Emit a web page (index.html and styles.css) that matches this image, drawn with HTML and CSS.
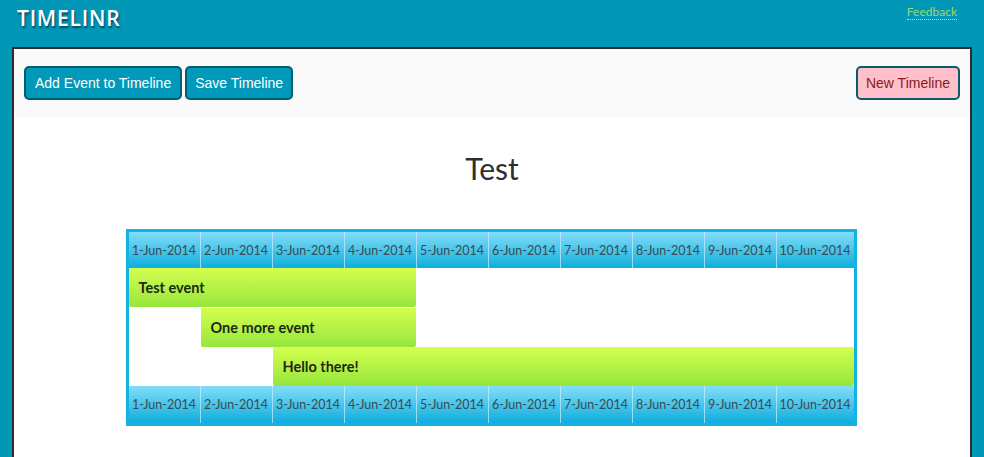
FILE: index.html
```html
<!DOCTYPE html>
<html>
<head>
<meta charset="utf-8">
<title>Timelinr</title>
<link rel="stylesheet" href="styles.css">
</head>
<body>
<header class="topbar">
  <div class="brand">TIMELINR</div>
  <a class="feedback" href="#">Feedback</a>
</header>
<main class="panel">
  <div class="toolbar">
    <div class="toolbar-left">
      <button class="btn">Add Event to Timeline</button>
      <button class="btn btn-save">Save Timeline</button>
    </div>
    <button class="btn btn-new">New Timeline</button>
  </div>
  <h1 class="title">Test</h1>
  <div class="timeline">
    <div class="dates">
      <div class="date">1-Jun-2014</div><div class="date">2-Jun-2014</div><div class="date">3-Jun-2014</div><div class="date">4-Jun-2014</div><div class="date">5-Jun-2014</div><div class="date">6-Jun-2014</div><div class="date">7-Jun-2014</div><div class="date">8-Jun-2014</div><div class="date">9-Jun-2014</div><div class="date">10-Jun-2014</div>
    </div>
    <div class="events">
      <div class="row"><div class="event span-1-5">Test event</div></div>
      <div class="row"><div class="event span-2-5">One more event</div></div>
      <div class="row"><div class="event span-3-11">Hello there!</div></div>
    </div>
    <div class="dates dates-bottom">
      <div class="date">1-Jun-2014</div><div class="date">2-Jun-2014</div><div class="date">3-Jun-2014</div><div class="date">4-Jun-2014</div><div class="date">5-Jun-2014</div><div class="date">6-Jun-2014</div><div class="date">7-Jun-2014</div><div class="date">8-Jun-2014</div><div class="date">9-Jun-2014</div><div class="date">10-Jun-2014</div>
    </div>
  </div>
</main>
</body>
</html>
```
FILE: styles.css
```css
html, body {
  margin: 0;
  padding: 0;
}
body {
  background: #0198b8;
  font-family: "Open Sans", "Noto Sans", sans-serif;
  overflow: hidden;
}
.topbar {
  height: 47px;
  display: flex;
  justify-content: space-between;
  align-items: flex-start;
  padding: 0 27px 0 17px;
  box-sizing: border-box;
}
.brand {
  margin-top: 5px;
  font-family: "Open Sans", sans-serif;
  font-weight: 600;
  font-size: 21px;
  letter-spacing: 0.8px;
  color: #ffffff;
  text-shadow: 1px 2px 2px rgba(0, 40, 60, 0.7);
  line-height: 26px;
}
.feedback {
  margin-top: 4px;
  font-family: "Lato", sans-serif;
  font-size: 12px;
  line-height: 15px;
  color: #9ed86a;
  text-decoration: none;
  border-bottom: 1px dotted #e8e82a;
}
.panel {
  margin: 0 12px;
  border: 2px solid #2c2c2c;
  background: #ffffff;
  height: 420px;
}
.toolbar {
  background: #fafafa;
  height: 68px;
  padding: 17px 10px 0 10px;
  box-sizing: border-box;
  display: flex;
  justify-content: space-between;
  align-items: flex-start;
}
.toolbar-left {
  display: flex;
  gap: 3px;
}
.btn {
  height: 34px;
  padding: 0 9px;
  border: 2px solid #035e6f;
  border-radius: 5px;
  background: #0199b9;
  color: #ffffff;
  font-family: "Liberation Sans", Arial, sans-serif;
  font-size: 14px;
}
.btn-save {
  padding: 0 8px;
}
.btn-new {
  background: #ffc0cb;
  color: #8a1a1a;
  border-color: #0a5a6a;
  padding: 0 8px;
}
.title {
  margin: 33px 0 0 0;
  text-align: center;
  font-family: "Lato", sans-serif;
  font-weight: 400;
  font-size: 30px;
  line-height: 37px;
  color: #2e2e2e;
}
.timeline {
  width: 725px;
  margin: 42px auto 0 auto;
  border: 3px solid #13b2e2;
  background: #ffffff;
  transform: translateX(-1px);
}
.dates {
  display: grid;
  grid-template-columns: 71px repeat(8, 72px) 1fr;
  height: 36px;
  background: linear-gradient(#83ddf8, #0eaedd);
}
.dates-bottom {
  height: 37px;
}
.date {
  display: flex;
  align-items: center;
  justify-content: center;
  font-family: "Lato", sans-serif;
  font-size: 12.5px;
  color: #3d4a52;
  border-left: 1px solid rgba(200, 240, 255, 0.7);
}
.date:first-child {
  border-left: none;
}
.events {
  display: flex;
  flex-direction: column;
}
.row {
  display: grid;
  grid-template-columns: 71px repeat(8, 72px) 1fr;
  height: 39px;
}
.row + .row {
  margin-top: 0.5px;
}
.event {
  display: flex;
  align-items: center;
  padding-left: 10px;
  font-family: "Lato", sans-serif;
  font-weight: 700;
  font-size: 14.5px;
  color: #1d2a10;
  background: linear-gradient(#d4ff4f, #96e63c);
  border-radius: 0 0 2px 2px;
}
.span-1-5 { grid-column: 1 / 5; }
.span-2-5 { grid-column: 2 / 5; margin-left: 1px; }
.span-3-11 { grid-column: 3 / 11; margin-left: 1px; }
```
